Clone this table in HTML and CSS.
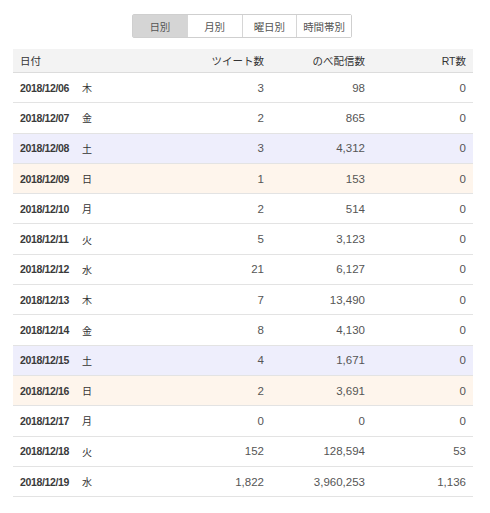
FILE: index.html
```html
<!DOCTYPE html>
<html lang="ja">
<head>
<meta charset="utf-8">
<link rel="stylesheet" href="styles.css">
</head>
<body>
<div class="page">
  <div class="tabs">
    <span class="tab active">日別</span>
    <span class="tab">月別</span>
    <span class="tab">曜日別</span>
    <span class="tab">時間帯別</span>
  </div>
  <div class="table">
    <div class="row head"><div class="c date">日付</div><div class="c num">ツイート数</div><div class="c num">のべ配信数</div><div class="c num">RT数</div></div>
    <div class="row"><div class="c date"><b>2018/12/06</b><span class="dow">木</span></div><div class="c num">3</div><div class="c num">98</div><div class="c num">0</div></div>
    <div class="row"><div class="c date"><b>2018/12/07</b><span class="dow">金</span></div><div class="c num">2</div><div class="c num">865</div><div class="c num">0</div></div>
    <div class="row sat"><div class="c date"><b>2018/12/08</b><span class="dow">土</span></div><div class="c num">3</div><div class="c num">4,312</div><div class="c num">0</div></div>
    <div class="row sun"><div class="c date"><b>2018/12/09</b><span class="dow">日</span></div><div class="c num">1</div><div class="c num">153</div><div class="c num">0</div></div>
    <div class="row"><div class="c date"><b>2018/12/10</b><span class="dow">月</span></div><div class="c num">2</div><div class="c num">514</div><div class="c num">0</div></div>
    <div class="row"><div class="c date"><b>2018/12/11</b><span class="dow">火</span></div><div class="c num">5</div><div class="c num">3,123</div><div class="c num">0</div></div>
    <div class="row"><div class="c date"><b>2018/12/12</b><span class="dow">水</span></div><div class="c num">21</div><div class="c num">6,127</div><div class="c num">0</div></div>
    <div class="row"><div class="c date"><b>2018/12/13</b><span class="dow">木</span></div><div class="c num">7</div><div class="c num">13,490</div><div class="c num">0</div></div>
    <div class="row"><div class="c date"><b>2018/12/14</b><span class="dow">金</span></div><div class="c num">8</div><div class="c num">4,130</div><div class="c num">0</div></div>
    <div class="row sat"><div class="c date"><b>2018/12/15</b><span class="dow">土</span></div><div class="c num">4</div><div class="c num">1,671</div><div class="c num">0</div></div>
    <div class="row sun"><div class="c date"><b>2018/12/16</b><span class="dow">日</span></div><div class="c num">2</div><div class="c num">3,691</div><div class="c num">0</div></div>
    <div class="row"><div class="c date"><b>2018/12/17</b><span class="dow">月</span></div><div class="c num">0</div><div class="c num">0</div><div class="c num">0</div></div>
    <div class="row"><div class="c date"><b>2018/12/18</b><span class="dow">火</span></div><div class="c num">152</div><div class="c num">128,594</div><div class="c num">53</div></div>
    <div class="row"><div class="c date"><b>2018/12/19</b><span class="dow">水</span></div><div class="c num">1,822</div><div class="c num">3,960,253</div><div class="c num">1,136</div></div>
  </div>
</div>
</body>
</html>
```
FILE: styles.css
```css
* { box-sizing: border-box; }
html, body { margin: 0; padding: 0; background: #fff; }
body { font-family: "Liberation Sans", Arial, "Noto Sans CJK JP", sans-serif; color: #555; }
.page { padding: 14px 17px 0 13px; width: 490px; }
.tabs {
  display: flex;
  width: 220px;
  margin: 0 0 11px 119px;
  border: 1px solid #cfcfcf;
  border-radius: 2px;
  height: 24px;
}
.tab {
  flex: 1;
  display: flex;
  align-items: center;
  justify-content: center;
  font-size: 10.5px;
  color: #555;
  border-left: 1px solid #d6d6d6;
  background: #fff;
}
.tab:first-child { border-left: none; }
.tab.active { background: #d5d5d5; color: #555; }
.table { width: 460px; }
.row {
  display: grid;
  grid-template-columns: 157px 101px 101px 101px;
  height: 30.3px;
  border-bottom: 1px solid #e3e3e3;
  align-items: center;
}
.row.head { height: 24px; background: #f3f3f3; border-bottom: 1px solid #dcdcdc; }
.row.head .c { font-size: 10.5px; color: #333; font-weight: normal; }
.row.sat { background: #eeeefc; }
.row.sun { background: #fef5ec; }
.c { padding: 0 7px; white-space: nowrap; }
.date { display: flex; align-items: center; }
.date b { font-size: 10.5px; font-weight: bold; color: #3a3a3a; letter-spacing: -0.35px; width: 62px; }
.dow { font-size: 10px; font-weight: normal; color: #333; }
.num { text-align: right; font-size: 11.5px; color: #555; }
```
